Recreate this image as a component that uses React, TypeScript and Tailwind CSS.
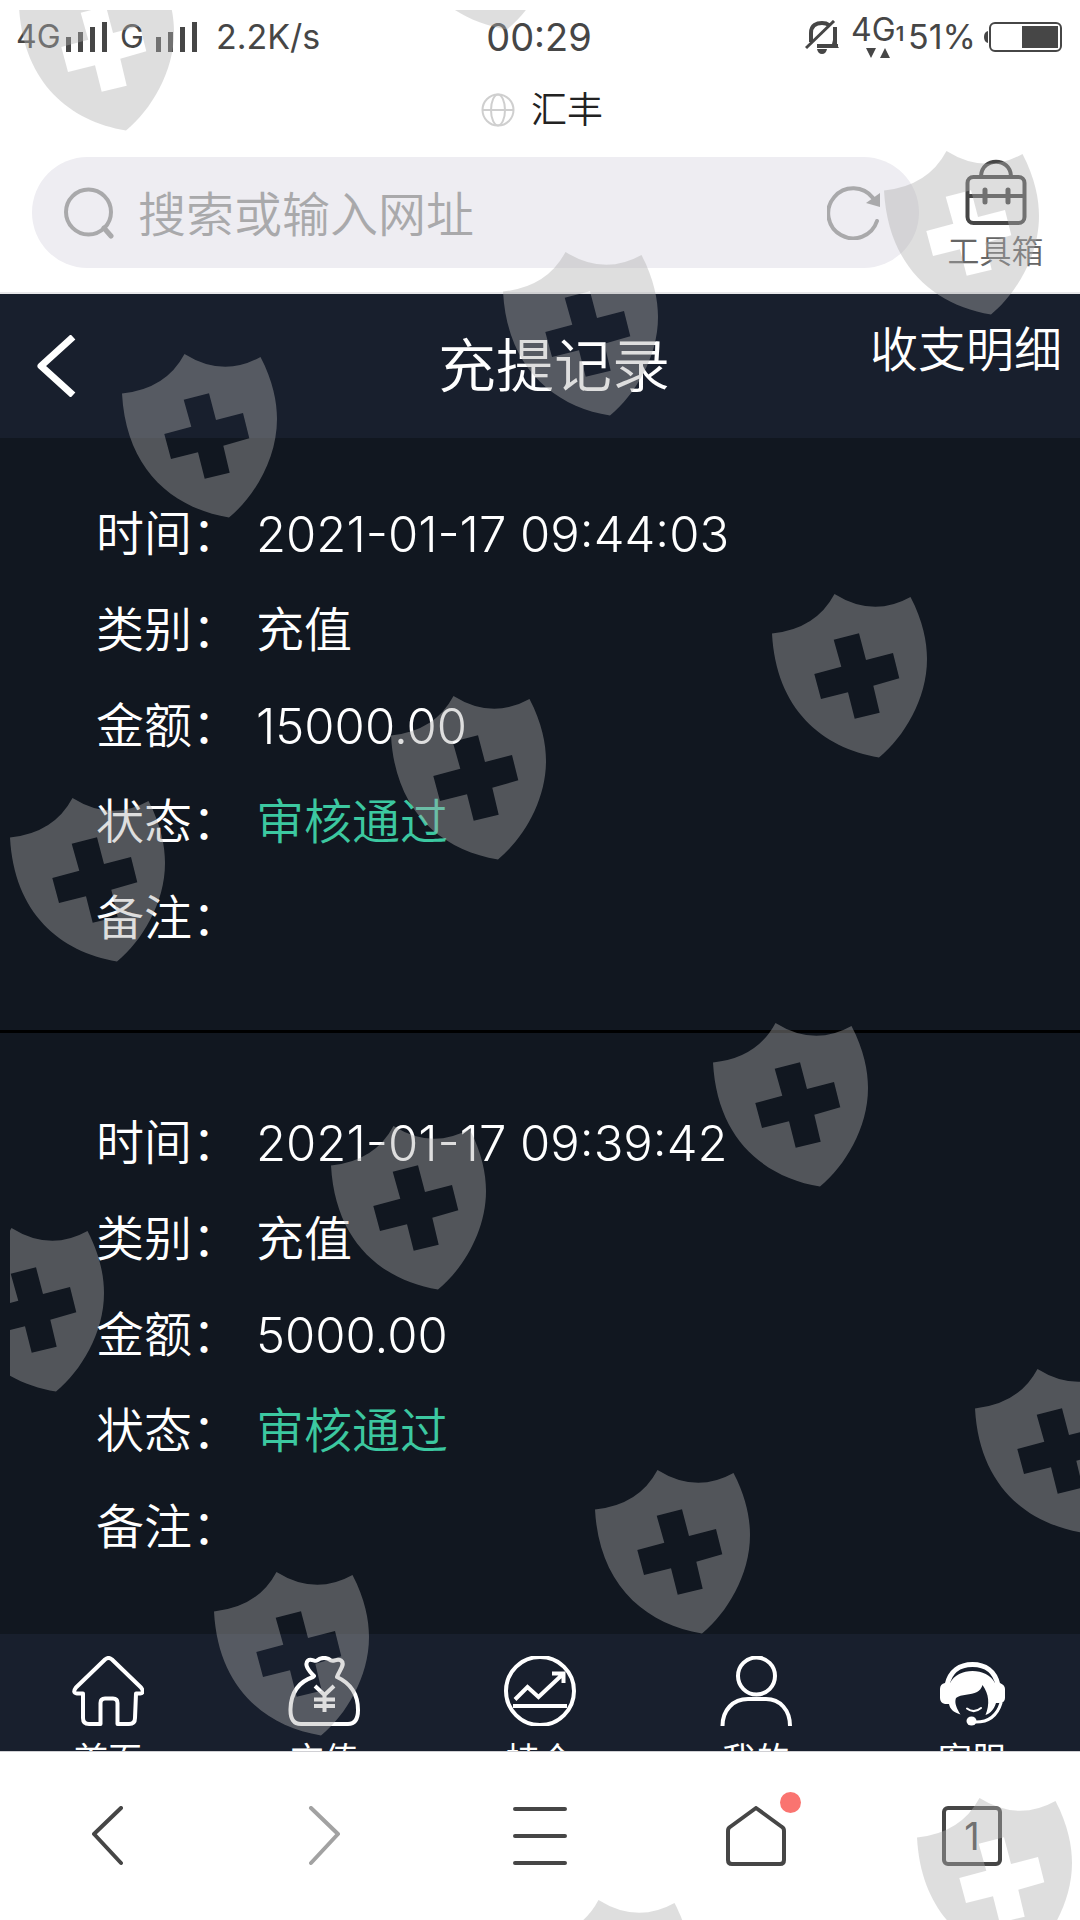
import type { ReactNode } from 'react'

type RecordItem = {
  time: string
  type: string
  amount: string
  status: string
  remark: string
}

const records: RecordItem[] = [
  { time: '2021-01-17 09:44:03', type: '充值', amount: '15000.00', status: '审核通过', remark: '' },
  { time: '2021-01-17 09:39:42', type: '充值', amount: '5000.00', status: '审核通过', remark: '' },
]

// Top left corner of every watermark shield
const shields = [
  [19, -33], [400, -134], [122, 354], [503, 252], [884, 151],
  [772, 594], [391, 696], [10, 798], [713, 1023], [331, 1126],
  [-51, 1228], [975, 1369], [595, 1470], [214, 1572], [917, 1798], [536, 1900],
]

const line = { fill: 'none', stroke: 'currentColor', strokeLinecap: 'round', strokeLinejoin: 'round' } as const

function NavIcon({ children }: { children: ReactNode }) {
  return (
    <svg viewBox="0 0 72 70" className="w-[72px] h-[70px]" {...line} strokeWidth={4} aria-hidden="true">
      {children}
    </svg>
  )
}

const navItems = [
  {
    label: '首页',
    icon: <path d="M33 3.500Q36.500 0.500 40 3.500L69 31.500Q73 37 68 37.500H64L63 62Q63 68 57 68H45.500V47Q45.500 42.500 41 42.500H33Q28.500 42.500 28.500 47V68H17Q11 68 11 62V37.500H5Q0 37 4 31.500Z" />,
  },
  {
    label: '充值',
    icon: (
      <>
        <path d="M26 20C20 14 16 8 20 4.500C23 2 27 6 29 4.500C33 1 39 1 43 4.500C46 6 49 2 53 4.500C58 8 51 15 49 21C62 27 70 38 70 54Q70 68 60 68H13Q2 68 2.500 53C3 38 10 26 25 21" />
        <path d="M27 30L36.500 39L46 30M26 43.500H47M26 50H47M36.500 39V56" strokeLinecap="butt" />
      </>
    ),
  },
  {
    label: '持仓',
    icon: (
      <>
        <circle cx="36" cy="35" r="34" />
        <path d="M9 50H63M11 43.500L23.500 31L34.500 41L59 18M48 17.500H59.500V27" strokeLinecap="butt" strokeLinejoin="miter" />
      </>
    ),
  },
  {
    label: '我的',
    icon: (
      <>
        <circle cx="36.500" cy="20" r="18.500" />
        <path d="M2.500 70C2.500 54 13 43 28 43H46C60 43 70 54 70 70" strokeLinecap="butt" />
      </>
    ),
  },
  {
    label: '客服',
    icon: (
      <>
        <path d="M11 29C14 15 24 8.500 36.500 8.500C49 8.500 59 15 62 29" strokeWidth={5} />
        <path d="M9 27H14C18 19 27 15 36.500 15C46 15 55 19 59 27H64Q69 29 69 33V42Q69 47 63 47H60C58 53 55 57 49.500 59C54 48 53 38 46.500 29Q45 34 41 36C35 39 25 38 20 42C18 47 21 53 24.500 58.500C17 56 14 53 13 48H9Q4 47 4 42V33Q4 28 9 27Z" fill="currentColor" stroke="none" />
        <path d="M31 52.500Q38 58 45 52" strokeWidth={2} />
        <path d="M65 47C61 60 52 67 37 66" strokeWidth={3} />
        <ellipse cx="35.500" cy="65" rx="5" ry="4.500" fill="currentColor" stroke="none" />
      </>
    ),
  },
]

function Signal() {
  return (
    <svg viewBox="0 0 42 30" className="w-[42px] h-[30px]" fill="currentColor" aria-hidden="true">
      <path d="M0 15h5v15h-5zM12 10h5v20h-5zM24 5h5v25h-5zM36 0h5v30h-5z" />
    </svg>
  )
}

function StatusBar() {
  return (
    <div className="grid grid-cols-[1fr_auto_1fr] items-center h-[74px] pl-4 pr-[18px] text-[#464646] text-[34px] leading-none">
      <div className="flex items-center">
        <span className="w-[50px] text-[32px]">4G</span>
        <Signal />
        <span className="w-[48px] text-center text-[32px]">G</span>
        <Signal />
        <span className="pl-[18px]">2.2K/s</span>
      </div>
      <time className="text-[38px]">00:29</time>
      <div className="flex items-center justify-end">
        <svg viewBox="0 0 34 34" className="w-[34px] h-[34px]" {...line} strokeWidth={4} strokeLinecap="butt" strokeLinejoin="miter" aria-hidden="true">
          <path d="M6 22V13C6 5 12 3 17 3C19 3 22 3.500 24 5M30 7V26M12 26H33" />
          <path d="M1 28L29 1" strokeWidth={3} />
          <path d="M12 29H22Q21 34 17 34T12 29Z" fill="currentColor" stroke="none" />
          <path d="M28 20L34 28H26Z" fill="currentColor" stroke="none" />
        </svg>
        <div className="flex flex-col items-center pl-3 pr-1">
          <span className="text-[32px] leading-7">
            4G<span className="text-xl font-semibold">1</span>
          </span>
          <svg viewBox="0 0 24 10" className="w-6 h-[10px]" fill="currentColor" aria-hidden="true">
            <path d="M0 0H10L5 10ZM14 10H24L19 0Z" />
          </svg>
        </div>
        <span>51%</span>
        <svg viewBox="0 0 78 30" className="ml-2 w-[78px] h-[30px]" fill="none" stroke="currentColor" strokeWidth={2} aria-hidden="true">
          <rect x="6" y="1" width="71" height="28" rx="5" />
          <path d="M38 4H74V26H38ZM4 9V21Q0 20 0 15T4 9Z" fill="currentColor" stroke="none" />
        </svg>
      </div>
    </div>
  )
}

function BrowserHeader() {
  return (
    <header className="shrink-0 bg-white border-b-2 border-[#e8e8ea]">
      <StatusBar />
      <div className="flex items-center justify-center gap-4 h-[72px] pl-1 text-[36px] leading-none text-[#222]">
        <svg viewBox="0 0 34 34" className="w-[34px] h-[34px] text-[#cfcfcf]" {...line} strokeWidth={2} aria-hidden="true">
          <circle cx="17" cy="17" r="15.500" />
          <ellipse cx="17" cy="17" rx="7" ry="15.500" />
          <path d="M2 17H32" />
        </svg>
        <h1 className="font-[350]">汇丰</h1>
      </div>
      <div className="flex items-start pl-8 pr-2 pt-[11px] pb-6">
        <label className="flex flex-1 items-center min-w-0 h-[111px] pl-8 pr-[38px] rounded-full bg-[#eeedf2] text-[#a9a9ab]">
          <svg viewBox="0 0 50 52" className="w-[50px] h-[52px] shrink-0" {...line} strokeWidth={4} aria-hidden="true">
            <circle cx="24.500" cy="25" r="22.500" />
            <path d="M40 41L47 49" strokeWidth={5} />
          </svg>
          <input
            type="text"
            aria-label="搜索或输入网址"
            placeholder="搜索或输入网址"
            className="flex-1 min-w-0 ml-6 pt-1 bg-transparent text-[48px] font-[350] outline-none placeholder:text-[#a9a9ab]"
          />
          <button type="button" aria-label="刷新">
            <svg viewBox="0 0 54 54" className="w-[54px] h-[54px]" {...line} strokeWidth={4} aria-hidden="true">
              <path d="M50 35A25 25 0 1 1 46 12" />
              <path d="M53 7V21L39 17Z" fill="currentColor" stroke="none" />
            </svg>
          </button>
        </label>
        <button type="button" className="flex flex-col items-center gap-[11px] w-[153px] pt-[2px] text-[#464646]">
          <svg viewBox="0 0 62 66" className="w-[62px] h-[66px]" {...line} strokeWidth={4} aria-hidden="true">
            <rect x="2.500" y="18" width="57" height="46" rx="6" />
            <path d="M16 17C17 -2 45 -2 46 17M3 37H59" />
            <path d="M20 31V43M43 31V43" strokeWidth={5} />
          </svg>
          <span className="text-[32px] leading-8 font-[350] text-[#666]">工具箱</span>
        </button>
      </div>
    </header>
  )
}

function Row({ label, children }: { label: string; children?: ReactNode }) {
  return (
    <div className="flex items-center h-24">
      <dt className="w-40">{label}：</dt>
      <dd>{children}</dd>
    </div>
  )
}

function RecordCard({ item }: { item: RecordItem }) {
  return (
    <li className="pt-[62px] first:pt-12 pb-16 px-24 border-b-[3px] border-black">
      <dl className="text-[48px] leading-none font-[350] text-white">
        <Row label="时间">
          <span className="text-[49px]">{item.time}</span>
        </Row>
        <Row label="类别">{item.type}</Row>
        <Row label="金额">
          <span className="text-[49px]">{item.amount}</span>
        </Row>
        <Row label="状态">
          <span className="text-[#3cc8a0]">{item.status}</span>
        </Row>
        <Row label="备注">{item.remark}</Row>
      </dl>
    </li>
  )
}

function BrowserToolbar() {
  return (
    <footer className="grid grid-cols-5 shrink-0 h-[168px] bg-white text-[#464646]">
      <button type="button" aria-label="后退" className="flex items-center justify-center">
        <svg viewBox="0 0 32 60" className="w-8 h-[60px]" {...line} strokeWidth={4} aria-hidden="true">
          <path d="M29 2L2 28L29 57" />
        </svg>
      </button>
      <button type="button" aria-label="前进" className="flex items-center justify-center text-[#a2a2a2]">
        <svg viewBox="0 0 32 60" className="w-8 h-[60px]" {...line} strokeWidth={4} aria-hidden="true">
          <path d="M3 2L30 28L3 57" />
        </svg>
      </button>
      <button type="button" aria-label="菜单" className="flex items-center justify-center">
        <svg viewBox="0 0 56 60" className="w-14 h-[60px]" {...line} strokeWidth={4} aria-hidden="true">
          <path d="M3 3H53M3 30H53M3 57H53" />
        </svg>
      </button>
      <button type="button" aria-label="主页" className="flex items-center justify-center">
        <span className="relative">
          <svg viewBox="0 0 60 60" className="w-[60px] h-[60px]" {...line} strokeWidth={4} aria-hidden="true">
            <path d="M30 2L56 21Q58 22 58 25V54Q58 58 54 58H6Q2 58 2 54V25Q2 22 4 21Z" />
          </svg>
          <span className="absolute -top-[14px] -right-[15px] w-[21px] h-[21px] rounded-full bg-[#fa7470]" />
        </span>
      </button>
      <button type="button" aria-label="标签页" className="flex items-center justify-center">
        <span className="flex items-center justify-center w-[60px] h-[60px] rounded-md border-4 border-[#464646] text-[38px] leading-none">
          1
        </span>
      </button>
    </footer>
  )
}

function Watermark() {
  return (
    <div className="absolute inset-0 overflow-hidden pointer-events-none">
      <svg className="w-full h-full" aria-hidden="true">
        <defs>
          <clipPath id="edge">
            <rect x="10" y="10" width="100%" height="100%" />
          </clipPath>
        </defs>
        <g clipPath="url(#edge)" fill="#afafaf" fillOpacity={0.41} fillRule="evenodd">
          {shields.map(([x, y]) => (
            <path
              key={`${x}-${y}`}
              transform={`translate(${x} ${y})`}
              d="M0 39.500Q44 35 62.500 0Q101 24 138.500 3C151 27 155 48 155 65C155 105 132 143 107 163.500C50 154 4 115 0 39.500ZM61.700 45.700L87 39.300L94 66L121 59L127.300 84.300L101.300 91.700L107.700 118.700L82.700 124.700L76 98.300L49 105L42.300 80L69.300 72.700Z"
            />
          ))}
        </g>
      </svg>
    </div>
  )
}

export default function App() {
  return (
    <div className="relative flex flex-col h-screen overflow-hidden bg-white font-['Inter','Noto_Sans_CJK_SC',sans-serif]">
      <BrowserHeader />

      <main className="flex flex-col flex-1 min-h-0 bg-[#111720] border-b border-[#d0d0d4]">
        <div className="grid grid-cols-[1fr_auto_1fr] items-center shrink-0 h-36 bg-[#181f2d] text-white">
          <button type="button" aria-label="返回" className="w-fit pl-9">
            <svg viewBox="0 0 40 62" className="w-10 h-[62px]" {...line} strokeWidth={7} strokeLinecap="butt" aria-hidden="true">
              <path d="M37 2L5 31L37 60" />
            </svg>
          </button>
          <h2 className="pl-7 text-[58px] leading-none font-[350]">充提记录</h2>
          <a href="#details" className="justify-self-end pr-[18px] pb-8 text-[48px] leading-none font-[350]">收支明细</a>
        </div>

        <ul className="flex-1 min-h-0 overflow-hidden">
          {records.map((item) => (
            <RecordCard key={item.time} item={item} />
          ))}
        </ul>

        <nav className="grid grid-cols-5 shrink-0 h-[117px] overflow-hidden bg-[#181f2d] text-white">
          {navItems.map((item) => (
            <a key={item.label} href="#" className="flex flex-col items-center gap-[14px] pt-[22px]">
              <NavIcon>{item.icon}</NavIcon>
              <span className="text-[34px] leading-10">{item.label}</span>
            </a>
          ))}
        </nav>
      </main>

      <BrowserToolbar />
      <Watermark />
    </div>
  )
}
